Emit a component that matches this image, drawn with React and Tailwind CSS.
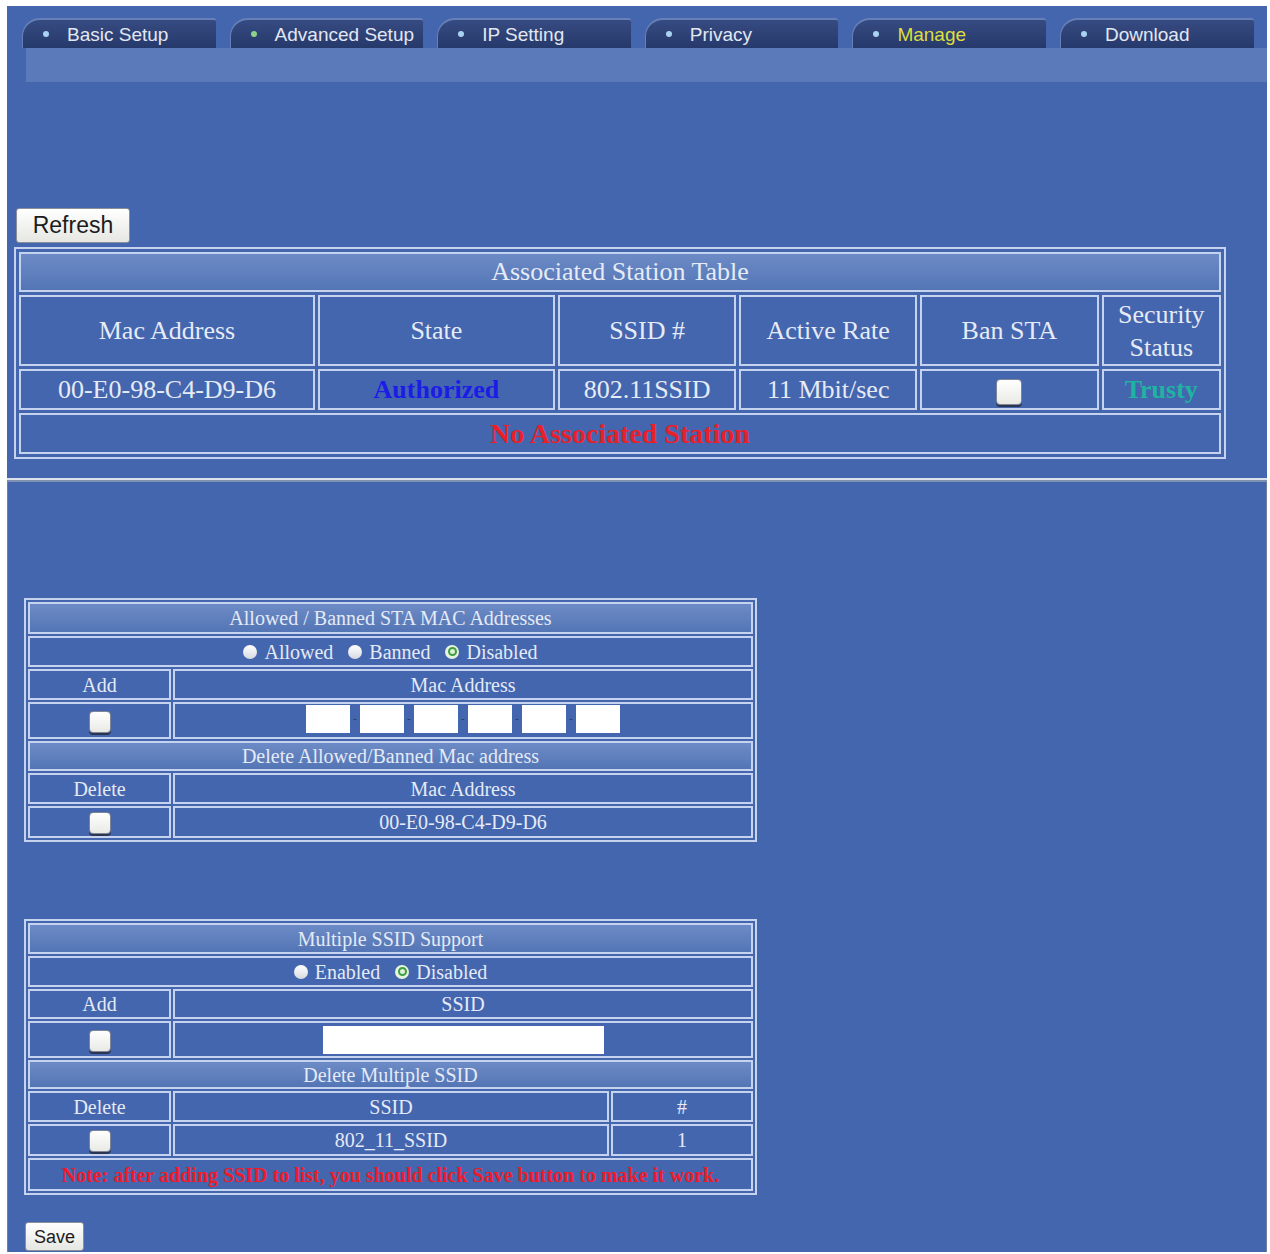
import React from 'react';

const sans = { fontFamily: '"Liberation Sans", Arial, sans-serif' };
const serif = { fontFamily: '"Liberation Serif", "Times New Roman", serif' };

const cell = 'border-2 border-[#c6d3ee] bg-[#4466ae] text-center';
const titleCell = 'border-2 border-[#c6d3ee] bg-gradient-to-b from-[#6c8bc6] to-[#5475b5] text-center';

const tabs = [
  { label: 'Basic Setup', dot: 'bg-[#a9d2f2]' },
  { label: 'Advanced Setup', dot: 'bg-[#8fd08a]' },
  { label: 'IP Setting', dot: 'bg-[#a9d2f2]' },
  { label: 'Privacy', dot: 'bg-[#a9d2f2]' },
  { label: 'Manage', dot: 'bg-[#a9d2f2]', active: true },
  { label: 'Download', dot: 'bg-[#a9d2f2]' },
];

const Tab = ({ label, dot, active }) => (
  <div className="flex h-[30px] w-[193.6px] items-center rounded-tl-[18px] rounded-tr-[3px] border-t-2 border-l border-[#6780b8] bg-gradient-to-b from-[#364b82] to-[#26396b] pl-[20px]">
    <span className={`h-[6px] w-[6px] rounded-full ${dot}`} />
    <span
      className={`ml-[18px] text-[19px] leading-none ${active ? 'text-[#dede3c]' : 'text-[#e2e7f2]'}`}
      style={sans}
    >
      {label}
    </span>
  </div>
);

const Checkbox = ({ big }) => (
  <span
    className={`inline-block rounded-[4px] border border-[#7d8596] bg-gradient-to-b from-white to-[#e9e9e4] align-middle shadow-[0_2px_0_#2b3550] ${
      big ? 'h-[26px] w-[26px]' : 'h-[22px] w-[22px]'
    }`}
  />
);

const Radio = ({ checked }) =>
  checked ? (
    <span className="inline-flex h-[14px] w-[14px] items-center justify-center rounded-full bg-[#e6f3de] align-middle">
      <span className="h-[9px] w-[9px] rounded-full border-2 border-[#3f9f3f] bg-[#dff0d6]" />
    </span>
  ) : (
    <span className="inline-block h-[14px] w-[14px] rounded-full bg-gradient-to-b from-white to-[#d6dae2] align-middle" />
  );

const Button = ({ children, className }) => (
  <button
    className={`rounded-[3px] border border-[#8b8f98] bg-gradient-to-b from-white to-[#e6e6e2] leading-none text-[#1c1c1c] ${className}`}
    style={sans}
  >
    {children}
  </button>
);

const StationTable = () => (
  <table
    className="ml-[7px] w-[1212px] table-fixed border-separate border-spacing-[3px] border-2 border-[#c6d3ee] text-[26px] leading-[30px] text-[#e6ebf6]"
    style={serif}
  >
    <colgroup>
      <col className="w-[295px]" />
      <col className="w-[236px]" />
      <col className="w-[178px]" />
      <col className="w-[177px]" />
      <col className="w-[178px]" />
      <col className="w-[119px]" />
    </colgroup>
    <tbody>
      <tr className="h-[40px]">
        <td colSpan={6} className={titleCell}>Associated Station Table</td>
      </tr>
      <tr className="h-[71px]">
        <td className={cell}>Mac Address</td>
        <td className={cell}>State</td>
        <td className={cell}>SSID #</td>
        <td className={cell}>Active Rate</td>
        <td className={cell}>Ban STA</td>
        <td className={`${cell} leading-[33px]`}>Security Status</td>
      </tr>
      <tr className="h-[41px]">
        <td className={cell}>00-E0-98-C4-D9-D6</td>
        <td className={`${cell} font-bold text-[#1c1ce6]`}>Authorized</td>
        <td className={cell}>802.11SSID</td>
        <td className={cell}>11 Mbit/sec</td>
        <td className={cell}>
          <Checkbox big />
        </td>
        <td className={`${cell} font-bold text-[#1fb3a2]`}>Trusty</td>
      </tr>
      <tr className="h-[41px]">
        <td colSpan={6} className={`${cell} text-[28px] font-bold text-[#e8202a]`}>
          No Associated Station
        </td>
      </tr>
    </tbody>
  </table>
);

const MacFilterTable = () => (
  <table
    className="ml-[16px] w-[733px] table-fixed border-separate border-spacing-[2px] border-2 border-[#c6d3ee] text-[20px] leading-[22px] text-[#e4eaf6]"
    style={serif}
  >
    <colgroup>
      <col className="w-[143px]" />
      <col />
    </colgroup>
    <tbody>
      <tr className="h-[32px]">
        <td colSpan={2} className={titleCell}>Allowed / Banned STA MAC Addresses</td>
      </tr>
      <tr className="h-[31px]">
        <td colSpan={2} className={cell}>
          <span className="inline-flex items-center gap-[7px]">
            <Radio /> <span className="mr-[8px]">Allowed</span>
            <Radio /> <span className="mr-[8px]">Banned</span>
            <Radio checked /> <span>Disabled</span>
          </span>
        </td>
      </tr>
      <tr className="h-[31px]">
        <td className={cell}>Add</td>
        <td className={cell}>Mac Address</td>
      </tr>
      <tr className="h-[37px]">
        <td className={cell}>
          <Checkbox />
        </td>
        <td className={cell}>
          <span className="inline-flex items-center">
            {[0, 1, 2, 3, 4, 5].map((i) => (
              <React.Fragment key={i}>
                {i > 0 && (
                  <span className="w-[10px] text-center text-[10px] leading-none text-[#2a3550]">-</span>
                )}
                <span className="h-[28px] w-[44px] bg-white" />
              </React.Fragment>
            ))}
          </span>
        </td>
      </tr>
      <tr className="h-[30px]">
        <td colSpan={2} className={titleCell}>Delete Allowed/Banned Mac address</td>
      </tr>
      <tr className="h-[31px]">
        <td className={cell}>Delete</td>
        <td className={cell}>Mac Address</td>
      </tr>
      <tr className="h-[32px]">
        <td className={cell}>
          <Checkbox />
        </td>
        <td className={cell}>00-E0-98-C4-D9-D6</td>
      </tr>
    </tbody>
  </table>
);

const SsidTable = () => (
  <table
    className="ml-[16px] w-[733px] table-fixed border-separate border-spacing-[2px] border-2 border-[#c6d3ee] text-[20px] leading-[22px] text-[#e4eaf6]"
    style={serif}
  >
    <colgroup>
      <col className="w-[143px]" />
      <col className="w-[436px]" />
      <col />
    </colgroup>
    <tbody>
      <tr className="h-[31px]">
        <td colSpan={3} className={titleCell}>Multiple SSID Support</td>
      </tr>
      <tr className="h-[31px]">
        <td colSpan={3} className={cell}>
          <span className="inline-flex items-center gap-[7px]">
            <Radio /> <span className="mr-[8px]">Enabled</span>
            <Radio checked /> <span>Disabled</span>
          </span>
        </td>
      </tr>
      <tr className="h-[30px]">
        <td className={cell}>Add</td>
        <td colSpan={2} className={cell}>SSID</td>
      </tr>
      <tr className="h-[37px]">
        <td className={cell}>
          <Checkbox />
        </td>
        <td colSpan={2} className={cell}>
          <span className="inline-block h-[28px] w-[281px] bg-white align-middle" />
        </td>
      </tr>
      <tr className="h-[29px]">
        <td colSpan={3} className={titleCell}>Delete Multiple SSID</td>
      </tr>
      <tr className="h-[31px]">
        <td className={cell}>Delete</td>
        <td className={cell}>SSID</td>
        <td className={cell}>#</td>
      </tr>
      <tr className="h-[32px]">
        <td className={cell}>
          <Checkbox />
        </td>
        <td className={cell}>802_11_SSID</td>
        <td className={cell}>1</td>
      </tr>
      <tr className="h-[33px]">
        <td colSpan={3} className={`${cell} text-[20px] font-bold text-[#ee1c2a]`}>
          Note: after adding SSID to list, you should click Save button to make it work.
        </td>
      </tr>
    </tbody>
  </table>
);

export default function App() {
  return (
    <div className="min-h-screen bg-white pl-[7px] pt-[6px]">
      <div className="w-[1260px] bg-[#4466ae]">
        {/* top frame */}
        <div className="h-[472px] pt-[12px]">
          <div className="flex gap-[14px] pl-[15px]">
            {tabs.map((t) => (
              <Tab key={t.label} {...t} />
            ))}
          </div>
          <div className="ml-[19px] h-[34px] bg-[#5b7ab9]" />
          <div className="ml-[9px] mt-[126px]">
            <Button className="h-[35px] w-[114px] text-[23px]">Refresh</Button>
          </div>
          <div className="mt-[4px]">
            <StationTable />
          </div>
        </div>

        {/* divider */}
        <div className="h-[2px] bg-[#dbe2ec]" />
        <div className="h-[2px] bg-[#7f8fae]" />

        {/* lower frame */}
        <div className="h-[770px] border-x border-[#6f7f9c] pt-[116px]">
          <MacFilterTable />
          <div className="mt-[77px]">
            <SsidTable />
          </div>
          <div className="ml-[17px] mt-[27px]">
            <Button className="h-[29px] w-[59px] text-[18px]">Save</Button>
          </div>
        </div>
      </div>
    </div>
  );
}
